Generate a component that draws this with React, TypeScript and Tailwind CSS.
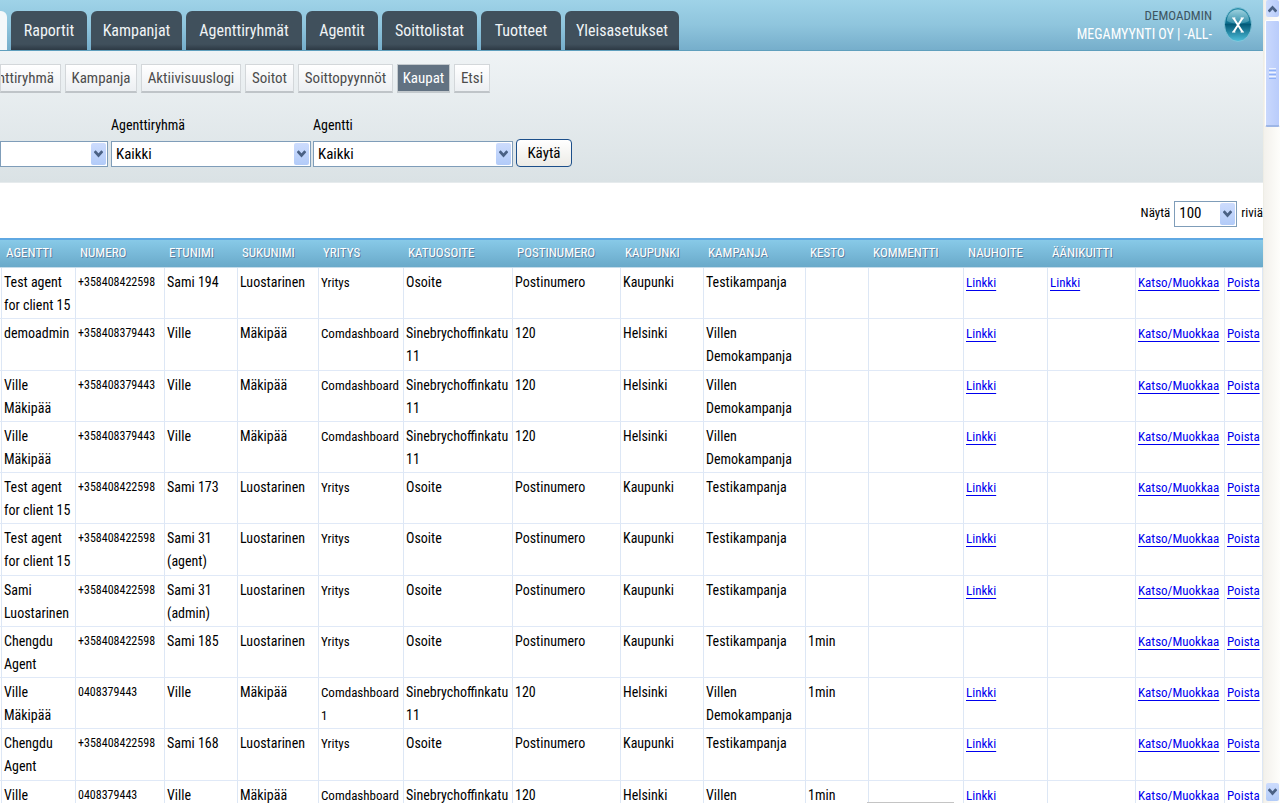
import React from "react";

const tabs: { label: string; width: string }[] = [
  { label: "Raportit", width: "w-[76px]" },
  { label: "Kampanjat", width: "w-[91px]" },
  { label: "Agenttiryhmät", width: "w-[116px]" },
  { label: "Agentit", width: "w-[72px]" },
  { label: "Soittolistat", width: "w-[95px]" },
  { label: "Tuotteet", width: "w-[80px]" },
  { label: "Yleisasetukset", width: "w-[114px]" },
];

const subTabs: { label: string; width: string; active?: boolean }[] = [
  { label: "Agenttiryhmä", width: "w-[61px]" },
  { label: "Kampanja", width: "w-[72px]" },
  { label: "Aktiivisuuslogi", width: "w-[100px]" },
  { label: "Soitot", width: "w-[49px]" },
  { label: "Soittopyynnöt", width: "w-[95px]" },
  { label: "Kaupat", width: "w-[53px]", active: true },
  { label: "Etsi", width: "w-[36px]" },
];

const columns: { label: string; width: string }[] = [
  { label: "", width: "w-[2px]" },
  { label: "Agentti", width: "w-[74px]" },
  { label: "Numero", width: "w-[89px]" },
  { label: "Etunimi", width: "w-[73px]" },
  { label: "Sukunimi", width: "w-[81px]" },
  { label: "Yritys", width: "w-[85px]" },
  { label: "Katuosoite", width: "w-[109px]" },
  { label: "Postinumero", width: "w-[108px]" },
  { label: "Kaupunki", width: "w-[83px]" },
  { label: "Kampanja", width: "w-[102px]" },
  { label: "Kesto", width: "w-[63px]" },
  { label: "Kommentti", width: "w-[95px]" },
  { label: "Nauhoite", width: "w-[84px]" },
  { label: "Äänikuitti", width: "w-[88px]" },
  { label: "", width: "w-[89px]" },
  { label: "", width: "" },
];

interface Sale {
  agent: string[];
  number: string;
  first: string[];
  last: string;
  company: string[];
  street: string[];
  zip: string;
  city: string;
  campaign: string[];
  duration?: string;
  recording?: boolean;
  receipt?: boolean;
}

const luostarinen = {
  number: "+358408422598",
  last: "Luostarinen",
  company: ["Yritys"],
  street: ["Osoite"],
  zip: "Postinumero",
  city: "Kaupunki",
  campaign: ["Testikampanja"],
  recording: true,
};

const makipaa = {
  number: "+358408379443",
  first: ["Ville"],
  last: "Mäkipää",
  company: ["Comdashboard"],
  street: ["Sinebrychoffinkatu", "11"],
  zip: "120",
  city: "Helsinki",
  campaign: ["Villen", "Demokampanja"],
  recording: true,
};

const testAgent = ["Test agent", "for client 15"];

const sales: Sale[] = [
  { ...luostarinen, agent: testAgent, first: ["Sami 194"], receipt: true },
  { ...makipaa, agent: ["demoadmin"] },
  { ...makipaa, agent: ["Ville", "Mäkipää"] },
  { ...makipaa, agent: ["Ville", "Mäkipää"] },
  { ...luostarinen, agent: testAgent, first: ["Sami 173"] },
  { ...luostarinen, agent: testAgent, first: ["Sami 31", "(agent)"] },
  { ...luostarinen, agent: ["Sami", "Luostarinen"], first: ["Sami 31", "(admin)"] },
  { ...luostarinen, agent: ["Chengdu", "Agent"], first: ["Sami 185"], duration: "1min", recording: false },
  { ...makipaa, agent: ["Ville", "Mäkipää"], number: "0408379443", company: ["Comdashboard", "1"], duration: "1min" },
  { ...luostarinen, agent: ["Chengdu", "Agent"], first: ["Sami 168"] },
  { ...makipaa, agent: ["Ville", "Mäkipää"], number: "0408379443", duration: "1min" },
];

function Chevron({ up = false }: { up?: boolean }) {
  return (
    <svg viewBox="0 0 9 8" className="h-2 w-[9px]" aria-hidden="true">
      <path d={up ? "M0.7 6.6 4.5 2.4 8.3 6.6" : "M0.7 1.2 4.5 5.4 8.3 1.2"} fill="none" stroke="#4a6184" strokeWidth="2.7" />
    </svg>
  );
}

function Dropdown({ id, value, className }: { id: string; value: string; className: string }) {
  return (
    <div className={`relative shrink-0 ${className}`}>
      <select
        id={id}
        aria-label={id}
        defaultValue={value}
        className="block h-full w-full appearance-none rounded-none border border-[#7f9db9] bg-white pl-1 text-[15px] leading-none text-black outline-none"
      >
        <option>{value}</option>
      </select>
      <span className="pointer-events-none absolute inset-y-0.5 right-0.5 flex w-[15px] items-center justify-center rounded-xs bg-linear-to-b from-[#cddcfd] to-[#b2cbf8]">
        <Chevron />
      </span>
    </div>
  );
}

function Lines({ lines }: { lines: string[] }) {
  return (
    <>
      {lines.map((line) => (
        <span key={line} className="block">
          {line}
        </span>
      ))}
    </>
  );
}

function Cell({ children, size = "text-sm/[23px]" }: { children?: React.ReactNode; size?: string }) {
  return (
    <td
      className={`border-r border-b border-[#dde7f5] border-b-[#e0e9f7] pt-[3px] pl-0.5 align-top whitespace-nowrap ${size}`}
    >
      {children}
    </td>
  );
}

function Link({ children }: { children: React.ReactNode }) {
  return (
    <a href="#" className="text-[#0000ee] underline underline-offset-3">
      {children}
    </a>
  );
}

function SignOut() {
  return (
    <button type="button" aria-label="Kirjaudu ulos" className="mt-[7px] h-[35px] w-7">
      <svg viewBox="0 0 28 35" className="h-full w-full" aria-hidden="true">
        <defs>
          <linearGradient id="orb" x1="0" y1="0" x2="0" y2="1">
            <stop offset="0" stopColor="#2b8fab" />
            <stop offset="0.45" stopColor="#0f7190" />
            <stop offset="0.5" stopColor="#045a78" />
            <stop offset="1" stopColor="#4fc0dc" />
          </linearGradient>
          <linearGradient id="shine" x1="0" y1="0" x2="0" y2="1">
            <stop offset="0" stopColor="#b8e2ec" />
            <stop offset="1" stopColor="#3b96b0" />
          </linearGradient>
        </defs>
        <ellipse cx="14" cy="17.5" rx="13.5" ry="17" fill="url(#orb)" stroke="#8cc9dc" strokeWidth="0.8" />
        <path d="M2.8 14C3.2 6.5 8 2.6 14 2.6S24.8 6.5 25.2 14C18 17.5 10 17.5 2.8 14Z" fill="url(#shine)" opacity="0.8" />
        <path d="M9.5 11 18.5 25M18.5 11 9.5 25" stroke="#fff" strokeWidth="2" />
        <path d="M8 11h3.4M16.6 11H20M8 25h3.4M16.6 25H20" stroke="#fff" strokeWidth="1.2" />
      </svg>
    </button>
  );
}

function ScrollBar() {
  return (
    <div className="flex w-[17px] shrink-0 flex-col items-center border-l border-[#eeede5] bg-linear-to-r from-[#f3f1ec] to-[#fefefb]">
      <button type="button" aria-label="Ylös" className="flex h-[17px] w-[13px] items-center justify-center rounded-xs bg-linear-to-r from-[#cddcfd] to-[#b7cbf9]">
        <Chevron up />
      </button>
      <div className="mt-[3px] flex h-[107px] w-[15px] flex-col items-center justify-center gap-px rounded-xs border border-b-2 border-white border-b-[#9db6e6] bg-linear-to-r from-[#c9d8fd] to-[#b9ccfb]">
        <span className="h-px w-[7px] bg-[#eef4fe]" />
        <span className="h-px w-[7px] bg-[#8cb0f8]" />
        <span className="h-px w-[7px] bg-[#eef4fe]" />
        <span className="h-px w-[7px] bg-[#8cb0f8]" />
        <span className="h-px w-[7px] bg-[#eef4fe]" />
        <span className="h-px w-[7px] bg-[#8cb0f8]" />
      </div>
      <button type="button" aria-label="Alas" className="mt-auto mb-0.5 flex h-[18px] w-[13px] items-center justify-center rounded-xs bg-linear-to-b from-[#cddcfd] to-[#b2cbf8]">
        <Chevron />
      </button>
    </div>
  );
}

export default function App() {
  return (
    <div className="relative flex h-screen overflow-hidden bg-white font-['Roboto_Condensed','Liberation_Sans_Narrow','Open_Sans_Condensed',sans-serif] text-sm text-black">
      <div className="min-w-0 flex-1 overflow-hidden">
        <header className="flex h-[51px] justify-between border-b border-[#5f9fbd] bg-linear-to-b from-[#9fd3e8] via-[#8fc5dd] to-[#76aecb]">
          <nav className="flex items-end gap-1">
            <span className="h-[39px] w-[7px] rounded-tr-md bg-[#f4f8fa]" />
            {tabs.map((t) => (
              <a
                key={t.label}
                href="#"
                className={`flex h-[39px] shrink-0 items-center justify-center rounded-t-md bg-linear-to-b from-[#40505c] from-85% to-[#2d3a45] text-base leading-none text-[#f0f4f6] ${t.width}`}
              >
                {t.label}
              </a>
            ))}
          </nav>
          <div className="flex gap-3 pr-[11px]">
            <div className="pt-1.5 text-right leading-[19px] uppercase">
              <div className="text-[13px] leading-[19px] text-[#3d5562]">Demoadmin</div>
              <div className="text-white">Megamyynti Oy | -All-</div>
            </div>
            <SignOut />
          </div>
        </header>

        <section className="h-[132px] border-b border-[#e6ebed] bg-linear-to-b from-[#eff3f5] to-[#dae2e5] pt-[13px]">
          <nav className="flex gap-1">
            {subTabs.map((t) => (
              <a
                key={t.label}
                href="#"
                className={`flex h-[29px] shrink-0 items-center overflow-hidden border border-b-2 text-[15px] leading-none whitespace-nowrap ${t.width} ${
                  t.label === "Agenttiryhmä" ? "justify-end pr-1.5" : "justify-center"
                } ${
                  t.active
                    ? "border-[#c3c9cd] bg-[#627282] text-white"
                    : "border-[#d3d7da] border-b-[#bfc4c8] bg-linear-to-b from-white to-[#eceff2] text-[#4c4c4c]"
                }`}
              >
                {t.label}
              </a>
            ))}
          </nav>
          <form className="mt-6 flex items-end gap-0.5" onSubmit={(e) => e.preventDefault()}>
            <Dropdown id="Kampanja" value=" " className="mr-px h-[26px] w-[108px]" />
            <div>
              <label htmlFor="Agenttiryhmä" className="block h-6 leading-4">
                Agenttiryhmä
              </label>
              <Dropdown id="Agenttiryhmä" value="Kaikki" className="h-[26px] w-[200px]" />
            </div>
            <div>
              <label htmlFor="Agentti" className="block h-6 leading-4">
                Agentti
              </label>
              <Dropdown id="Agentti" value="Kaikki" className="h-[26px] w-[200px]" />
            </div>
            <button
              type="submit"
              className="ml-px h-7 w-14 rounded-sm border border-[#1c4f8a] bg-linear-to-b from-white to-[#ecebe6] text-[15px] leading-none"
            >
              Käytä
            </button>
          </form>
        </section>

        <div className="flex h-[55px] items-center justify-end gap-1 pt-1.5 text-[13px]">
          <label htmlFor="Rivit">Näytä</label>
          <Dropdown id="Rivit" value="100" className="h-[26px] w-[63px]" />
          <span>riviä</span>
        </div>

        <table className="h-[594px] w-full table-fixed border-separate border-spacing-0">
          <colgroup>
            {columns.map((c, i) => (
              <col key={i} className={c.width} />
            ))}
          </colgroup>
          <thead>
            <tr className="bg-linear-to-b from-[#8accea] to-[#68a8c8]">
              {columns.map((c, i) => (
                <th
                  key={i}
                  className={`h-[30px] border-t-2 border-b border-t-[#5fa8e2] border-b-[#c5dcea] text-left text-[13px] font-normal whitespace-nowrap text-white uppercase text-shadow-[1px_1px_0_#5d7f9f] ${
                    c.label ? "pl-1" : ""
                  }`}
                >
                  {c.label}
                </th>
              ))}
            </tr>
          </thead>
          <tbody>
            {sales.map((s, i) => (
              <tr key={i}>
                <Cell />
                <Cell><Lines lines={s.agent} /></Cell>
                <Cell size="text-xs/[23px]">{s.number}</Cell>
                <Cell><Lines lines={s.first} /></Cell>
                <Cell>{s.last}</Cell>
                <Cell size="text-[13px]/[23px]"><Lines lines={s.company} /></Cell>
                <Cell><Lines lines={s.street} /></Cell>
                <Cell>{s.zip}</Cell>
                <Cell>{s.city}</Cell>
                <Cell><Lines lines={s.campaign} /></Cell>
                <Cell>{s.duration}</Cell>
                <Cell />
                <Cell size="text-[13px]/[23px]">{s.recording && <Link>Linkki</Link>}</Cell>
                <Cell size="text-[13px]/[23px]">{s.receipt && <Link>Linkki</Link>}</Cell>
                <Cell size="text-[13px]/[23px]"><Link>Katso/Muokkaa</Link></Cell>
                <Cell size="text-[13px]/[23px]"><Link>Poista</Link></Cell>
              </tr>
            ))}
          </tbody>
        </table>
      </div>
      <ScrollBar />
      <span className="absolute right-[326px] bottom-0 h-px w-[87px] bg-[#c4c4c4]" />
    </div>
  );
}
